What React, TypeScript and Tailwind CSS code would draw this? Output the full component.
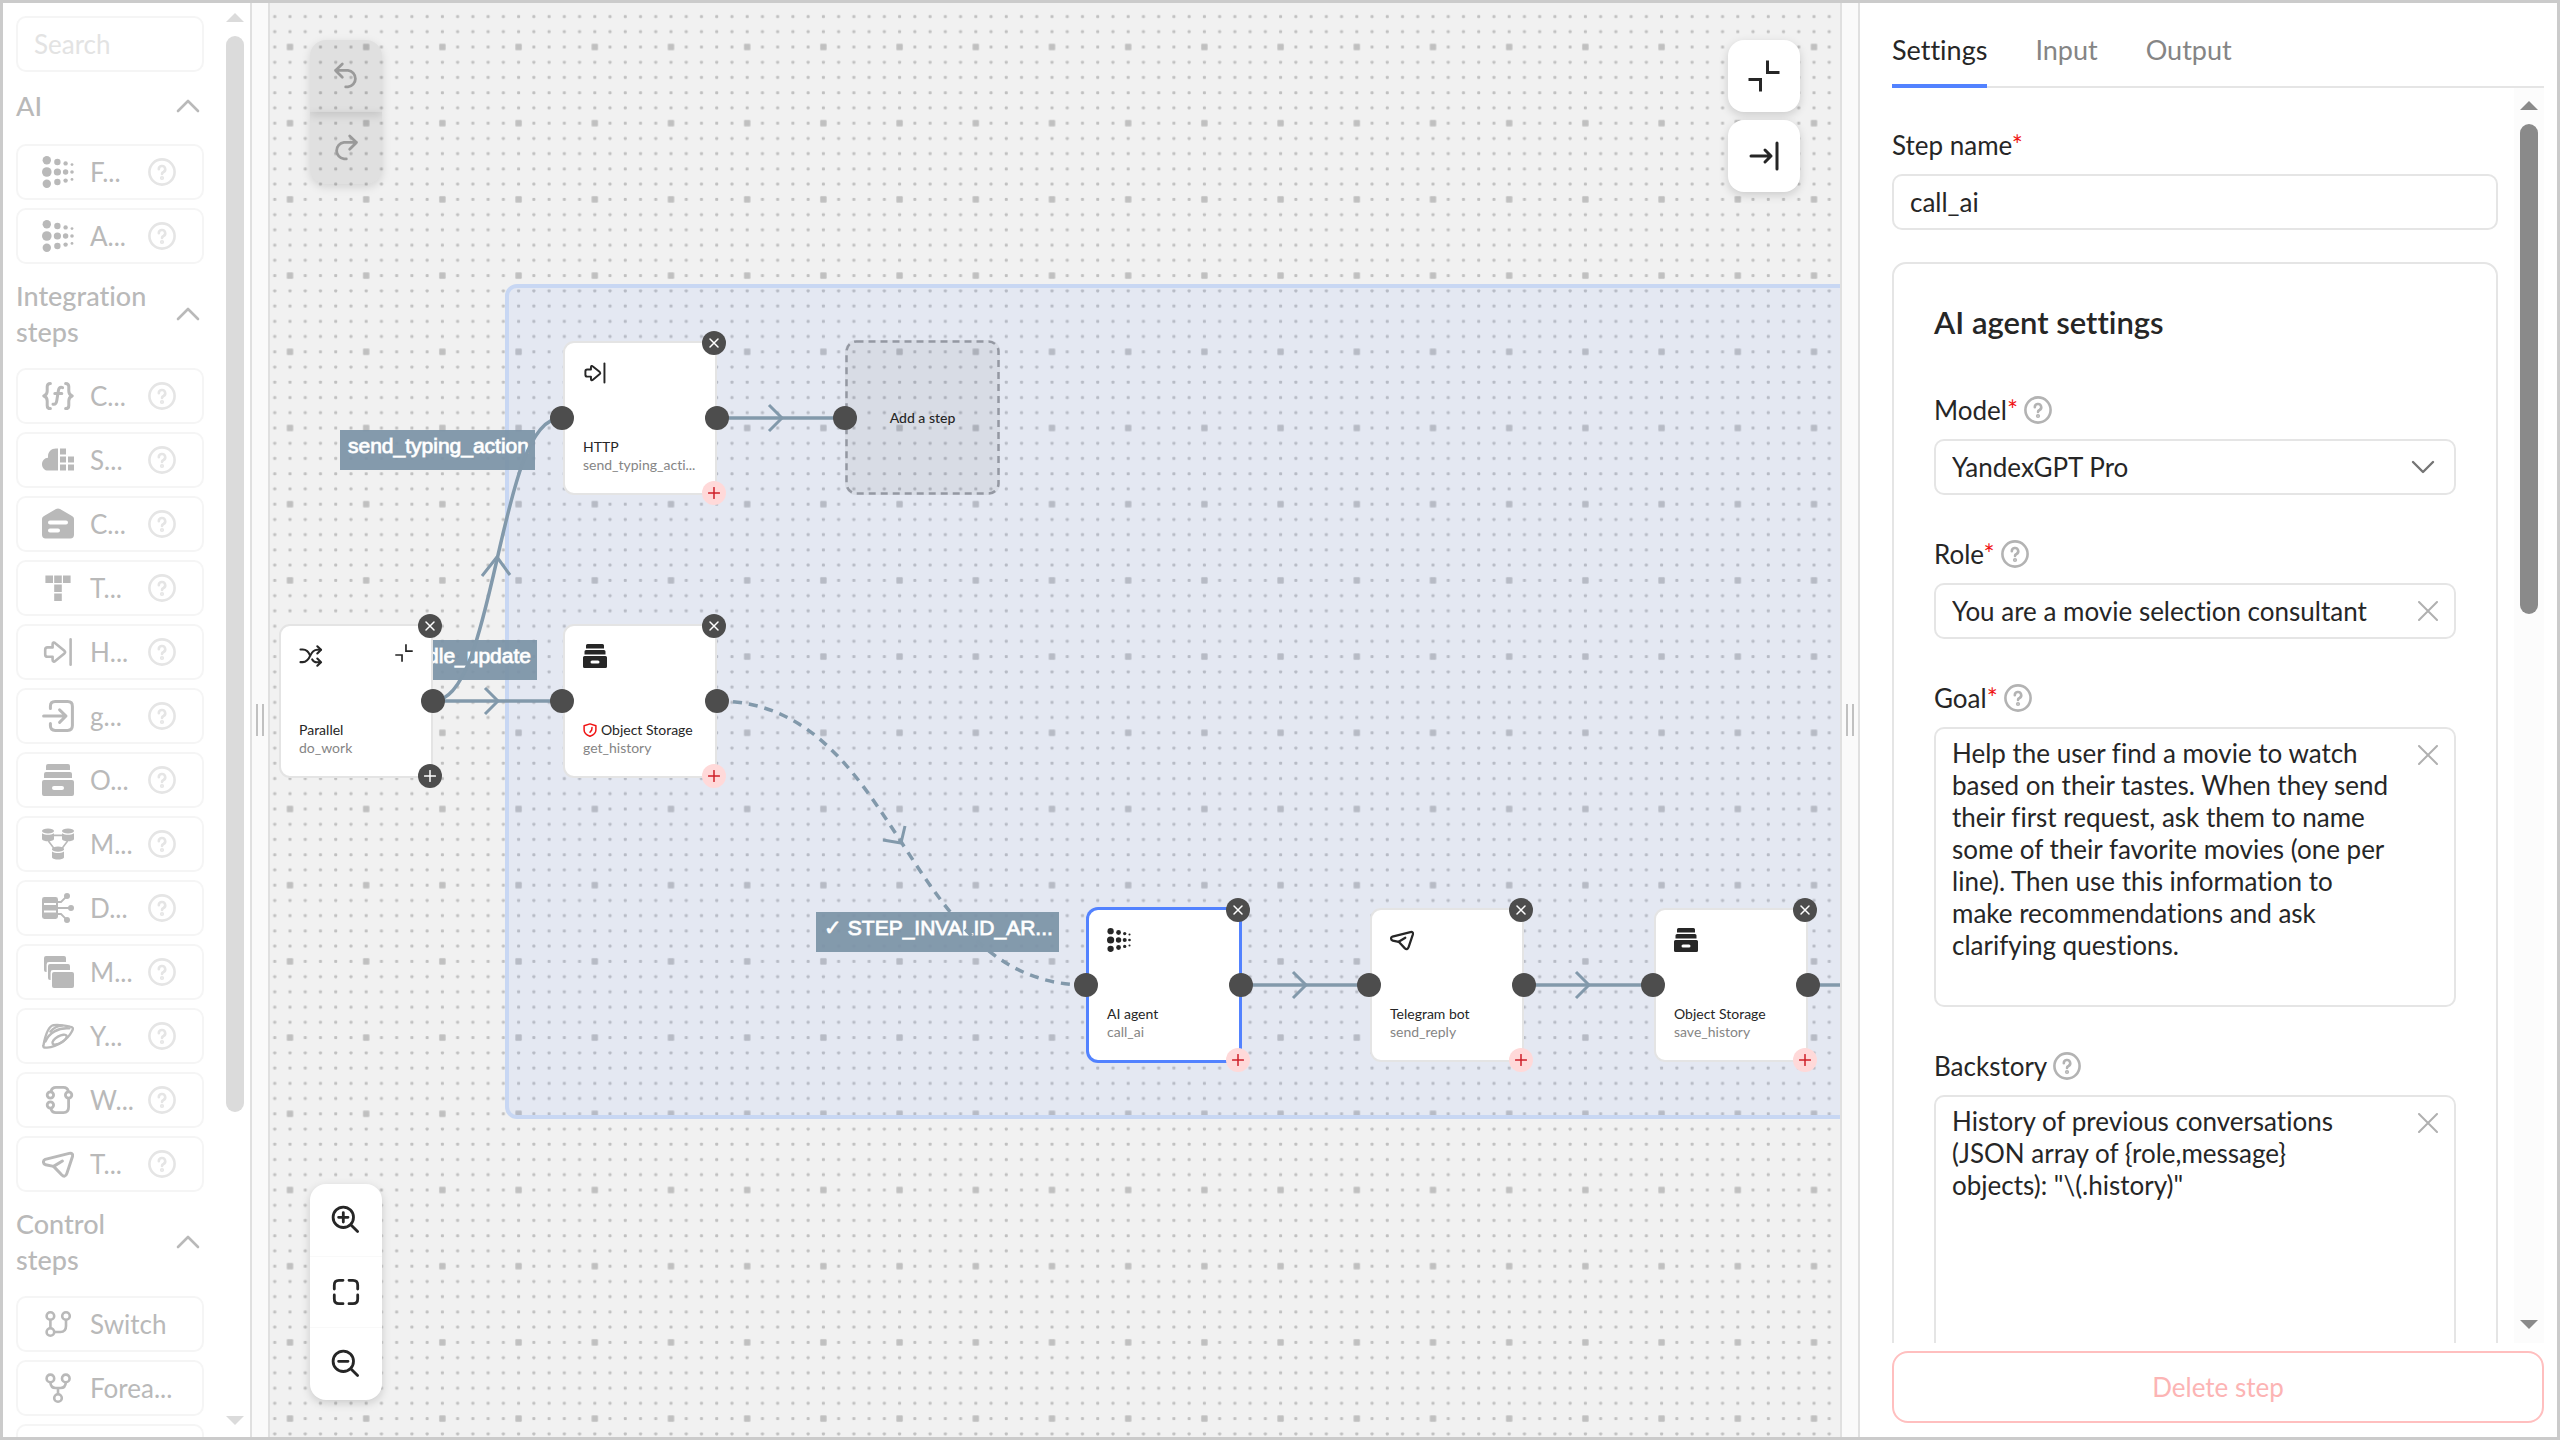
import type { ReactNode } from "react";

type IconProps = { className?: string };

/* ---------- step icons (16 unit grid) ---------- */

function Glyph({ className = "size-8", children }: IconProps & { children: ReactNode }) {
  return (
    <svg viewBox="0 0 16 16" className={`shrink-0 ${className}`} fill="currentColor" aria-hidden="true">
      {children}
    </svg>
  );
}

function Lines({ width = 1.3, children }: { width?: number; children: ReactNode }) {
  return (
    <g fill="none" stroke="currentColor" strokeWidth={width} strokeLinecap="round" strokeLinejoin="round">
      {children}
    </g>
  );
}

const DotsIcon = ({ className }: IconProps) => (
  <Glyph className={className}>
    <circle cx="2.4" cy="2.1" r="2.1" />
    <circle cx="2.4" cy="8" r="2.4" />
    <circle cx="2.4" cy="13.9" r="2.1" />
    <circle cx="7.7" cy="3" r="1.6" />
    <circle cx="7.7" cy="8" r="1.8" />
    <circle cx="7.7" cy="13" r="1.6" />
    <circle cx="11.8" cy="3.7" r="1.1" />
    <circle cx="11.8" cy="8" r="1.35" />
    <circle cx="11.8" cy="12.3" r="1.1" />
    <circle cx="15" cy="4.3" r="0.7" />
    <circle cx="15" cy="8" r="0.9" />
    <circle cx="15" cy="11.7" r="0.7" />
  </Glyph>
);

const FunctionIcon = ({ className }: IconProps) => (
  <Glyph className={className}>
    <Lines width={1.5}>
      <path d="M4.2 1.7C3 1.7 2.6 2.3 2.6 3.3v2.2C2.6 6.8 2.1 7.6.9 8c1.2.4 1.7 1.2 1.7 2.5v2.2c0 1 .4 1.6 1.6 1.6" />
      <path d="M11.8 1.7c1.2 0 1.6.6 1.6 1.6v2.2c0 1.3.5 2.1 1.7 2.5-1.2.4-1.7 1.2-1.7 2.5v2.2c0 1-.4 1.6-1.6 1.6" />
      <path d="M10.3 3.8C9 3.3 8.4 4 8.2 5.2l-.8 5c-.2 1.4-.7 2.2-1.9 1.9M6.4 6.8h3.5" />
    </Lines>
  </Glyph>
);

const CloudGridIcon = ({ className }: IconProps) => (
  <Glyph className={className}>
    <path d="M8 2.3H7C4.6 2.3 3 4 3 6.3v.6C1.3 7 0 8.4 0 10.1c0 1.8 1.3 3.2 3 3.2h5z" />
    <path d="M9 2.3h3v3H9zM9 6.3h3v3H9zM13 6.3h3v3h-3zM9 10.3h3v3H9zM13 10.3h3v3h-3z" />
  </Glyph>
);

const RegistryIcon = ({ className }: IconProps) => (
  <Glyph className={className}>
    <path
      fillRule="evenodd"
      d="M1 4 7 .5q1-.5 2 0L15 4q1 .5 1 1.4v8q0 1.8-1.8 1.8H1.8Q0 15.2 0 13.4v-8Q0 4.5 1 4zM4 6.2a1 1 0 0 0 0 2h8a1 1 0 0 0 0-2zM4 10.2a1 1 0 0 0 0 2h4a1 1 0 0 0 0-2z"
    />
  </Glyph>
);

const TrackerIcon = ({ className }: IconProps) => (
  <Glyph className={className}>
    <path d="M1.7 1.7h3.8v3.8H1.7zM6.1 1.7h3.8v3.8H6.1zM10.5 1.7h3.8v3.8h-3.8zM6.1 6.2h3.8V10H6.1zM6.1 10.7h3.8v3.8H6.1z" />
  </Glyph>
);

const HttpIcon = ({ className }: IconProps) => (
  <Glyph className={className}>
    <Lines width={1.3}>
      <path d="M5.3 5.7V4.1c0-.9.7-1.1 1.3-.5l4.6 3.8c.4.4.4.9 0 1.3l-4.6 3.8c-.6.6-1.3.4-1.3-.5v-1.6H2.8c-.9 0-1.2-.3-1.2-1.2V6.9c0-.9.3-1.2 1.2-1.2z" />
      <path d="M14.3 1.7v12.7" />
    </Lines>
  </Glyph>
);

const EnterIcon = ({ className }: IconProps) => (
  <Glyph className={className}>
    <Lines width={1.5}>
      <path d="M4.2 4.2V3.2c0-1.6.8-2.4 2.4-2.4h6.2c1.6 0 2.4.8 2.4 2.4v9.6c0 1.6-.8 2.4-2.4 2.4H6.6c-1.6 0-2.4-.8-2.4-2.4v-1" />
      <path d="M.8 8h11M8.8 4.9 12 8l-3.2 3.2" />
    </Lines>
  </Glyph>
);

const StorageIcon = ({ className }: IconProps) => (
  <Glyph className={className}>
    <path d="M2 1q0-1 1-1h10q1 0 1 1v2H2zM1 5q0-1 1-1h12q1 0 1 1v2H1z" />
    <path fillRule="evenodd" d="M0 9q0-1 1-1h14q1 0 1 1v6q0 1-1 1H1q-1 0-1-1zm6 2a1 1 0 0 0 0 2h4a1 1 0 0 0 0-2z" />
  </Glyph>
);

const ClusterIcon = ({ className }: IconProps) => (
  <Glyph className={className}>
    <g fill="none" stroke="currentColor" strokeWidth="0.8">
      <path d="M5 3.7h6M3.2 6.5l3 4M12.8 6.5l-3 4" />
    </g>
    <ellipse cx="3" cy="1.5" rx="3" ry="1.3" />
    <path d="M0 2.6c1.8 1 4.2 1 6 0v3C5.3 7 .7 7 0 5.6z" />
    <ellipse cx="13" cy="1.5" rx="3" ry="1.3" />
    <path d="M10 2.6c1.8 1 4.2 1 6 0v3c-.7 1.4-5.3 1.4-6 0z" />
    <ellipse cx="8" cy="10.6" rx="3" ry="1.3" />
    <path d="M5 11.7c1.8 1 4.2 1 6 0v3c-.7 1.4-5.3 1.4-6 0z" />
  </Glyph>
);

const StreamsIcon = ({ className }: IconProps) => (
  <Glyph className={className}>
    <path
      fillRule="evenodd"
      d="M1.2 2.5h5.6Q8 2.5 8 3.7v8.6q0 1.2-1.2 1.2H1.2Q0 13.5 0 12.3V3.7q0-1.2 1.2-1.2zM1 5.5v1h6v-1zM1 9.3v1h6v-1z"
    />
    <g fill="none" stroke="currentColor" strokeWidth="0.9">
      <path d="M8 5h1.5L12.3 2.2M8 8h6M8 11h1.5l2.8 2.8" />
    </g>
    <circle cx="12.5" cy="2" r="1.5" />
    <circle cx="14.5" cy="8" r="1.5" />
    <circle cx="12.5" cy="14" r="1.5" />
  </Glyph>
);

const QueueIcon = ({ className }: IconProps) => (
  <Glyph className={className}>
    <path d="M1 1q0-1 1-1h9q1 0 1 1v2H3.5Q2.3 3 2.3 4.2V8H2Q1 8 1 7z" />
    <path d="M3 5q0-1 1-1h9q1 0 1 1v2H5.5Q4.3 7 4.3 8.2V12H4q-1 0-1-1z" />
    <path d="M5 9q0-1 1-1h9q1 0 1 1v6q0 1-1 1H6q-1 0-1-1z" />
  </Glyph>
);

const SaucerIcon = ({ className }: IconProps) => (
  <Glyph className={className}>
    <Lines width={1.2}>
      <path d="M.7 12.8C1.5 8.5 3.2 3.2 5.7 2.6c2.5-.5 5 0 8.3.7 1.5.2 1.8.9 1 2.3-2 3.8-7 7.8-12.5 8.2-1.5.1-2-.1-1.8-1z" />
      <path d="M1.7 10.7C3.6 6.5 8 3.7 13.7 4.2" />
      <path d="M4.2 5.8C6 3.7 8 2.9 10 2.8" />
      <ellipse cx="8.8" cy="9.8" rx="4" ry="1.7" transform="rotate(-30 8.8 9.8)" />
    </Lines>
  </Glyph>
);

const WorkflowIcon = ({ className }: IconProps) => (
  <Glyph className={className}>
    <Lines width={1.4}>
      <circle cx="4.2" cy="5.5" r="1.6" />
      <circle cx="4.2" cy="10.5" r="1.6" />
      <circle cx="13.3" cy="5.5" r="1.6" />
      <path d="M4.5 3.7C4.8 2.4 5.6 1.7 7 1.7h3.7c1.4 0 2.2.7 2.5 2M13.3 7.3v4.2c0 1.8-.9 2.8-2.6 2.8H7c-1.4 0-2.2-.7-2.5-1.9" />
    </Lines>
  </Glyph>
);

const TelegramIcon = ({ className }: IconProps) => (
  <Glyph className={className}>
    <Lines width={1.5}>
      <path d="M1.6 5.7 13.6 2.7c1.4-.3 2 .4 1.6 1.7l-2.8 8.4c-.5 1.5-1.5 1.7-2.6.6L5.8 9.2 1.8 8.4C.4 8.1.4 6.1 1.6 5.7z" />
      <path d="m5.8 9.2 4.4-2.7" />
    </Lines>
  </Glyph>
);

const SwitchIcon = ({ className }: IconProps) => (
  <Glyph className={className}>
    <Lines width={1.3}>
      <circle cx="4.2" cy="4" r="1.9" />
      <circle cx="12" cy="4" r="1.9" />
      <circle cx="4.2" cy="12" r="1.9" />
      <path d="M4.2 6v4M12 6v3c0 2-.9 3-2.8 3H6.3" />
    </Lines>
  </Glyph>
);

const ForkIcon = ({ className }: IconProps) => (
  <Glyph className={className}>
    <Lines width={1.3}>
      <circle cx="4.2" cy="3.2" r="1.9" />
      <circle cx="11.9" cy="3.2" r="1.9" />
      <circle cx="8" cy="13" r="1.9" />
      <path d="M4.2 5.2c.1 1.9.9 2.8 2.6 2.8h2.5c1.7 0 2.5-.9 2.6-2.8M8 8v3" />
    </Lines>
  </Glyph>
);

const ShuffleIcon = ({ className }: IconProps) => (
  <Glyph className={className}>
    <Lines width={1.4}>
      <path d="M1 3.7h1.5c2.5 0 4 1.5 5 4.2M1 12.1h1.5c3 0 4-2 5-4.3s2.3-4 4.7-4h2.3" />
      <path d="M8.8 10.3c.8 1.3 1.7 1.9 3 1.9h2.7M12.2 1.5l2.5 2.3-2.5 2.5M12.2 9.7l2.5 2.4-2.5 2.4" />
    </Lines>
  </Glyph>
);

/* ---------- interface icons ---------- */

function Stroke({ box, width, className, children }: { box: string; width: number; className: string; children: ReactNode }) {
  return (
    <svg
      viewBox={box}
      className={`shrink-0 ${className}`}
      fill="none"
      stroke="currentColor"
      strokeWidth={width}
      strokeLinecap="round"
      strokeLinejoin="round"
      aria-hidden="true"
    >
      {children}
    </svg>
  );
}

const HelpIcon = () => (
  <Stroke box="0 0 28 28" width={2.6} className="size-7">
    <circle cx="14" cy="14" r="12.6" />
    <path d="M10.8 11.2a3.2 3.2 0 1 1 4.7 2.8c-1 .5-1.5 1-1.5 2" />
    <circle cx="14" cy="20" r="0.8" />
  </Stroke>
);

const CrossIcon = () => (
  <Stroke box="0 0 20 20" width={2} className="size-5">
    <path d="m1 1 18 18M19 1 1 19" />
  </Stroke>
);

const CollapseIcon = ({ className }: { className: string }) => (
  <svg viewBox="0 0 32 32" className={className} fill="none" stroke="currentColor" strokeWidth="3" aria-hidden="true">
    <path d="M19.5 0.5v12H31.5M0.5 19.5h12v12" />
  </svg>
);

function Arrow({ up }: { up?: boolean }) {
  return (
    <svg viewBox="0 0 18 9" className="h-[9px] w-[18px]" fill="currentColor" aria-hidden="true">
      <path d={up ? "M0 9 9 0l9 9z" : "M0 0h18L9 9z"} />
    </svg>
  );
}

/* ---------- left palette ---------- */

type PaletteItem = { label: string; icon: (p: IconProps) => ReactNode; help?: boolean };

const palette: { title: string; items: PaletteItem[] }[] = [
  {
    title: "AI",
    items: [
      { label: "F...", icon: DotsIcon, help: true },
      { label: "A...", icon: DotsIcon, help: true },
    ],
  },
  {
    title: "Integration steps",
    items: [
      { label: "C...", icon: FunctionIcon, help: true },
      { label: "S...", icon: CloudGridIcon, help: true },
      { label: "C...", icon: RegistryIcon, help: true },
      { label: "T...", icon: TrackerIcon, help: true },
      { label: "H...", icon: HttpIcon, help: true },
      { label: "g...", icon: EnterIcon, help: true },
      { label: "O...", icon: StorageIcon, help: true },
      { label: "M...", icon: ClusterIcon, help: true },
      { label: "D...", icon: StreamsIcon, help: true },
      { label: "M...", icon: QueueIcon, help: true },
      { label: "Y...", icon: SaucerIcon, help: true },
      { label: "W...", icon: WorkflowIcon, help: true },
      { label: "T...", icon: TelegramIcon, help: true },
    ],
  },
  {
    title: "Control steps",
    items: [
      { label: "Switch", icon: SwitchIcon },
      { label: "Forea...", icon: ForkIcon },
      { label: "", icon: () => null },
    ],
  },
];

function Palette() {
  return (
    <aside className="flex w-[247px] shrink-0 bg-white text-[#b9b9b9]">
      <div className="min-w-0 flex-1 overflow-hidden px-4 py-[13px] pl-[13px]">
        <input
          type="search"
          aria-label="Search"
          placeholder="Search"
          className="block h-14 w-full rounded-[10px] border-2 border-[#f5f5f5] bg-white px-4 text-[26px] outline-none placeholder:text-[#e3e3e3]"
        />
        {palette.map((group) => (
          <section key={group.title}>
            <button type="button" className="flex min-h-[72px] w-full items-center justify-between pt-3.5 pr-1 pb-[18px] text-left">
              <span className="w-36 text-[27px] leading-9 font-medium">{group.title}</span>
              <Stroke box="0 0 24 14" width={2.6} className="h-3.5 w-6">
                <path d="M2 12 12 2l10 10" />
              </Stroke>
            </button>
            <div className="flex flex-col gap-2">
              {group.items.map((item, i) => (
                <div
                  key={i}
                  className={`flex h-14 items-center rounded-[10px] border-2 border-[#f5f5f5] pl-6 ${item.help ? "pr-[26px]" : "pr-4"}`}
                >
                  <button type="button" className="flex min-w-0 flex-1 items-center gap-4 text-left">
                    <item.icon className="size-8" />
                    <span className="text-[26px] leading-9 whitespace-nowrap">{item.label}</span>
                  </button>
                  {item.help && (
                    <button type="button" aria-label="About this step" className="text-[#e5e5e5]">
                      <HelpIcon />
                    </button>
                  )}
                </div>
              ))}
            </div>
          </section>
        ))}
      </div>
      <div className="flex w-[30px] shrink-0 flex-col items-center pt-2.5 pb-3 text-[#dbdbdb]">
        <Arrow up />
        <div className="mt-3.5 flex-1">
          <div className="h-[78%] w-[18px] rounded-full bg-[#dbdbdb]" />
        </div>
        <Arrow />
      </div>
    </aside>
  );
}

function Splitter() {
  return (
    <div className="flex w-5 shrink-0 items-center justify-center gap-1 border-x-2 border-[#e0e0e0] bg-[#fafafa]">
      <span className="h-8 w-0.5 bg-[#c0c0c0]" />
      <span className="h-8 w-0.5 bg-[#c0c0c0]" />
    </div>
  );
}

/* ---------- canvas ---------- */

type StepNode = {
  x: number;
  y: number;
  title: string;
  name: string;
  icon: (p: IconProps) => ReactNode;
  input?: boolean;
  selected?: boolean;
  container?: boolean;
  guarded?: boolean;
};

const steps: StepNode[] = [
  { x: 9, y: 621, title: "Parallel", name: "do_work", icon: ShuffleIcon, container: true },
  { x: 293, y: 338, title: "HTTP", name: "send_typing_acti...", icon: HttpIcon, input: true },
  { x: 293, y: 621, title: "Object Storage", name: "get_history", icon: StorageIcon, input: true, guarded: true },
  { x: 817, y: 905, title: "AI agent", name: "call_ai", icon: DotsIcon, input: true, selected: true },
  { x: 1100, y: 905, title: "Telegram bot", name: "send_reply", icon: TelegramIcon, input: true },
  { x: 1384, y: 905, title: "Object Storage", name: "save_history", icon: StorageIcon, input: true },
];

const labels = [
  { x: 70, y: 427, text: "send_typing_action" },
  { x: 114, y: 637, text: "handle_update" },
  { x: 546, y: 909, text: "✓ STEP_INVALID_AR..." },
];

function StepCard({ step }: { step: StepNode }) {
  const frame = step.selected ? "border-[#5282ff] ring-1 ring-[#5282ff]" : "border-[#e4e4e4]";
  return (
    <article
      className={`absolute flex size-[154px] flex-col justify-between rounded-[11px] border-2 bg-white px-[18px] pt-[18px] pb-[19px] ${frame}`}
      style={{ left: step.x, top: step.y }}
    >
      <div className="flex items-start justify-between">
        <step.icon className="size-6" />
        {step.container && (
          <button type="button" aria-label="Collapse">
            <CollapseIcon className="size-[18px]" />
          </button>
        )}
      </div>
      <div className="text-[14px] leading-[18px] whitespace-nowrap">
        <h3 className="flex items-center gap-1">
          {step.guarded && (
            <Stroke box="0 0 14 14" width={1.5} className="size-3.5 text-[#f01414]">
              <path d="M7 .9 12.9 2.8V7c0 3-2.5 5-5.9 6.2C3.6 12 1.1 10 1.1 7V2.8zM9 4.5 8.7 7 7 9.2" />
            </Stroke>
          )}
          {step.title}
        </h3>
        <p className="text-[#858585]">{step.name}</p>
      </div>
      {step.input && <span className="absolute top-[63px] -left-[15px] size-6 rounded-full bg-[#4d4d4d]" />}
      <span className="absolute top-[63px] -right-3.5 size-6 rounded-full bg-[#4d4d4d]" />
      <button
        type="button"
        aria-label="Delete step"
        className="absolute -top-3 -right-[11px] flex size-6 items-center justify-center rounded-full bg-[#4d4d4d] text-white"
      >
        <Stroke box="0 0 12 12" width={1.5} className="size-3">
          <path d="m2 2 8 8M10 2 2 10" />
        </Stroke>
      </button>
      <button
        type="button"
        aria-label="Add step"
        className={`absolute -right-[11px] -bottom-3 flex size-6 items-center justify-center rounded-full ${
          step.container ? "bg-[#4d4d4d] text-white" : "bg-[#ffd9d9] text-[#cf1f28]"
        }`}
      >
        <Stroke box="0 0 12 12" width={1.5} className="size-3">
          <path d="M6 .6v10.8M.6 6h10.8" />
        </Stroke>
      </button>
    </article>
  );
}

function Edges() {
  return (
    <svg className="absolute inset-0 size-full" fill="none" stroke="#8299ab" strokeWidth="3.5" aria-hidden="true">
      <path d="M163 698C227 698 227 415 291 415" />
      <path d="M212 573 227 554 240 572" strokeWidth="3" strokeLinejoin="round" />
      <path d="M163 698H291M447 415H575M970 982H1100M1254 982H1383M1537 982H3000" />
      <path
        d="m215 685 13 13-13 13M499 402l13 13-13 13M1023 969l13 13-13 13M1306 969l13 13-13 13"
        strokeWidth="3"
        strokeLinejoin="round"
      />
      <path d="M447 698C632 698 632 982 816 982" strokeDasharray="9 7" />
      <path d="M613 837 631 840 635 823" strokeWidth="3" strokeLinejoin="round" />
    </svg>
  );
}

function DotGrid() {
  const rows = [7.62, 22.86, 38.1, 53.34, 68.58];
  return (
    <svg className="absolute inset-0 size-full" aria-hidden="true">
      <defs>
        <pattern id="dots" x="-18.1" y="5.9" width="76.2" height="76.2" patternUnits="userSpaceOnUse">
          {rows.map((y) =>
            rows.map((x) => {
              const r = x === 38.1 && y === 38.1 ? 3.2 : 1.5;
              return <rect key={`${x}-${y}`} x={x - r} y={y - r} width={r * 2} height={r * 2} rx={0.8} fill="#c0c0c0" />;
            }),
          )}
        </pattern>
      </defs>
      <rect width="100%" height="100%" fill="url(#dots)" />
    </svg>
  );
}

const floating = "flex size-[72px] items-center justify-center";

function Canvas() {
  return (
    <main className="relative min-w-0 flex-1 overflow-hidden bg-[#f1f1f1] text-[#262626]">
      <DotGrid />
      <div className="absolute top-[281px] left-[235px] h-[835px] w-[3000px] rounded-[12px] border-4 border-[#c8d7f3] bg-[#5282ff]/8" />
      {labels.map((label) => (
        <div
          key={label.text}
          className="absolute h-10 bg-[#7b92a6]/92 pr-1.5 pl-2 font-['Liberation_Sans'] text-[21px] leading-8 whitespace-nowrap text-white [-webkit-text-stroke:1px_#ffffffd0]"
          style={{ left: label.x, top: label.y }}
        >
          {label.text}
        </div>
      ))}
      <Edges />
      <button
        type="button"
        className="absolute top-[337px] left-[575px] size-[155px] rounded-[11px] bg-black/5 text-[14px] font-medium"
      >
        <svg className="absolute inset-0 size-full" fill="none" stroke="#9498a2" strokeWidth="2.5" aria-hidden="true">
          <rect x="1.5" y="1.5" width="152" height="152" rx="10" strokeDasharray="7 5" />
        </svg>
        Add a step
        <span className="absolute top-[66px] -left-3 size-6 rounded-full bg-[#4d4d4d]" />
      </button>
      {steps.map((step) => (
        <StepCard key={`${step.x}-${step.y}`} step={step} />
      ))}

      <div className="absolute top-[37px] left-10 flex flex-col text-[#9a9a9a]">
        <button type="button" aria-label="Undo" className={`${floating} rounded-t-2xl bg-black/7 shadow-[0_3px_10px_rgba(0,0,0,0.13)]`}>
          <Stroke box="0 0 32 32" width={2.8} className="size-8">
            <path d="M12.3 4 5.5 10.4l6.8 6.8M5.5 10.4H18a8.3 8.3 0 0 1 0 16.5h-2.3" />
          </Stroke>
        </button>
        <button type="button" aria-label="Redo" className={`${floating} rounded-b-2xl bg-black/7 shadow-[0_3px_10px_rgba(0,0,0,0.13)]`}>
          <Stroke box="0 0 32 32" width={2.8} className="size-8">
            <path d="m19.7 4 6.8 6.4-6.8 6.8M26.5 10.4H14a8.3 8.3 0 0 0 0 16.5h2.3" />
          </Stroke>
        </button>
      </div>

      <div className="absolute top-[37px] right-10 flex flex-col gap-2">
        <button type="button" aria-label="Collapse all" className={`${floating} rounded-2xl bg-white shadow-[0_3px_10px_rgba(0,0,0,0.16)]`}>
          <CollapseIcon className="size-8" />
        </button>
        <button type="button" aria-label="Hide panel" className={`${floating} rounded-2xl bg-white shadow-[0_3px_10px_rgba(0,0,0,0.16)]`}>
          <Stroke box="0 0 32 32" width={3} className="size-8">
            <path d="M3 16h20M17 10l6 6-6 6M29 3v26" />
          </Stroke>
        </button>
      </div>

      <div className="absolute bottom-[37px] left-10 flex flex-col overflow-hidden rounded-2xl bg-white shadow-[0_3px_10px_rgba(0,0,0,0.16)]">
        <button type="button" aria-label="Zoom in" className={floating}>
          <Stroke box="0 0 32 32" width={2.8} className="size-8">
            <circle cx="13.3" cy="13.3" r="10.2" />
            <path d="m21 21 6.6 6.6M8.6 13.3H18M13.3 8.6V18" />
          </Stroke>
        </button>
        <button type="button" aria-label="Fit to screen" className={`${floating} border-y border-[#f9f9f9]`}>
          <Stroke box="0 0 32 32" width={2.8} className="size-8">
            <path d="M4.3 13V9Q4.3 4.3 9 4.3h4M19 4.3h4q4.7 0 4.7 4.7v4M27.7 19v4q0 4.7-4.7 4.7h-4M13 27.7H9Q4.3 27.7 4.3 23v-4" />
          </Stroke>
        </button>
        <button type="button" aria-label="Zoom out" className={floating}>
          <Stroke box="0 0 32 32" width={2.8} className="size-8">
            <circle cx="13.3" cy="13.3" r="10.2" />
            <path d="m21 21 6.6 6.6M8.6 13.3H18" />
          </Stroke>
        </button>
      </div>
    </main>
  );
}

/* ---------- settings panel ---------- */

const goal =
  "Help the user find a movie to watch based on their tastes. When they send their first request, ask them to name some of their favorite movies (one per line). Then use this information to make recommendations and ask clarifying questions.";
const backstory = 'History of previous conversations (JSON array of {role,message}\nobjects): "\\(.history)"';

const box = "block w-full rounded-[10px] border-2 border-[#e5e5e5] bg-white px-4 outline-none";

function Field({ id, label, required, help, children }: { id: string; label: string; required?: boolean; help?: boolean; children: ReactNode }) {
  return (
    <div>
      <div className="mb-3 flex h-[34px] items-center gap-1.5">
        <label htmlFor={id} className="leading-8">
          {label}
          {required && <span className="text-[#f01414]">*</span>}
        </label>
        {help && (
          <button type="button" aria-label={`About ${label}`} className="text-[#b3b3b3]">
            <HelpIcon />
          </button>
        )}
      </div>
      <div className="relative">{children}</div>
    </div>
  );
}

function Clear() {
  return (
    <button type="button" aria-label="Clear" className="absolute top-[18px] right-[18px] text-[#b0b0b0]">
      <CrossIcon />
    </button>
  );
}

function SettingsPanel() {
  return (
    <section className="flex w-[697px] shrink-0 flex-col bg-white pr-[13px] pl-8 text-[26px] text-[#262626]">
      <div role="tablist" className="flex h-[85px] shrink-0 gap-12 border-b-2 border-[#e5e5e5] text-[27px]">
        <button type="button" role="tab" aria-selected="true" className="-mb-0.5 border-b-4 border-[#5282ff] pt-3.5">
          Settings
        </button>
        <button type="button" role="tab" aria-selected="false" className="pt-3 text-[#858585]">
          Input
        </button>
        <button type="button" role="tab" aria-selected="false" className="pt-3 text-[#858585]">
          Output
        </button>
      </div>
      <div className="flex min-h-0 flex-1">
        <div className="min-w-0 flex-1 overflow-hidden pt-10">
          <Field id="step-name" label="Step name" required>
            <input id="step-name" className={`${box} h-14`} defaultValue="call_ai" />
          </Field>
          <div className="mt-8 flex flex-col gap-[42px] rounded-[14px] border-2 border-[#e5e5e5] px-10 pt-[34px] pb-10">
            <h2 className="mb-[5px] text-[31px] leading-[48px] font-semibold">AI agent settings</h2>
            <Field id="model" label="Model" required help>
              <select id="model" className={`${box} h-14 appearance-none`} defaultValue="YandexGPT Pro">
                <option>YandexGPT Pro</option>
              </select>
              <span className="pointer-events-none absolute top-[21px] right-[21px] text-[#757575]">
                <Stroke box="0 0 24 14" width={2.4} className="h-3.5 w-6">
                  <path d="m2 2 10 10L22 2" />
                </Stroke>
              </span>
            </Field>
            <Field id="role" label="Role" required help>
              <input id="role" className={`${box} h-14 pr-14`} defaultValue="You are a movie selection consultant" />
              <Clear />
            </Field>
            <Field id="goal" label="Goal" required help>
              <textarea id="goal" className={`${box} h-[280px] resize-none overflow-hidden py-2 pr-14 leading-8`} defaultValue={goal} />
              <Clear />
            </Field>
            <Field id="backstory" label="Backstory" help>
              <textarea id="backstory" className={`${box} h-[280px] resize-none overflow-hidden py-2 pr-14 leading-8`} defaultValue={backstory} />
              <Clear />
            </Field>
          </div>
        </div>
        <div className="ml-[16px] flex w-[30px] shrink-0 flex-col items-center bg-[#fcfcfc] pt-[13px] pb-3.5 text-[#8a8a8a]">
          <Arrow up />
          <div className="mt-3.5 flex-1">
            <div className="h-[41%] w-[18px] rounded-full bg-[#8a8a8a]" />
          </div>
          <Arrow />
        </div>
      </div>
      <button type="button" className="mt-2 mb-3.5 h-[72px] shrink-0 rounded-2xl border-2 border-[#ffbfbf] text-[#fcb4b4]">
        Delete step
      </button>
    </section>
  );
}

export default function App() {
  return (
    <div className="flex h-screen border-[3px] border-[#cbcbcb] bg-white font-[Lato,'Noto_Sans',sans-serif] [font-variant-ligatures:none]">
      <Palette />
      <Splitter />
      <Canvas />
      <Splitter />
      <SettingsPanel />
    </div>
  );
}
